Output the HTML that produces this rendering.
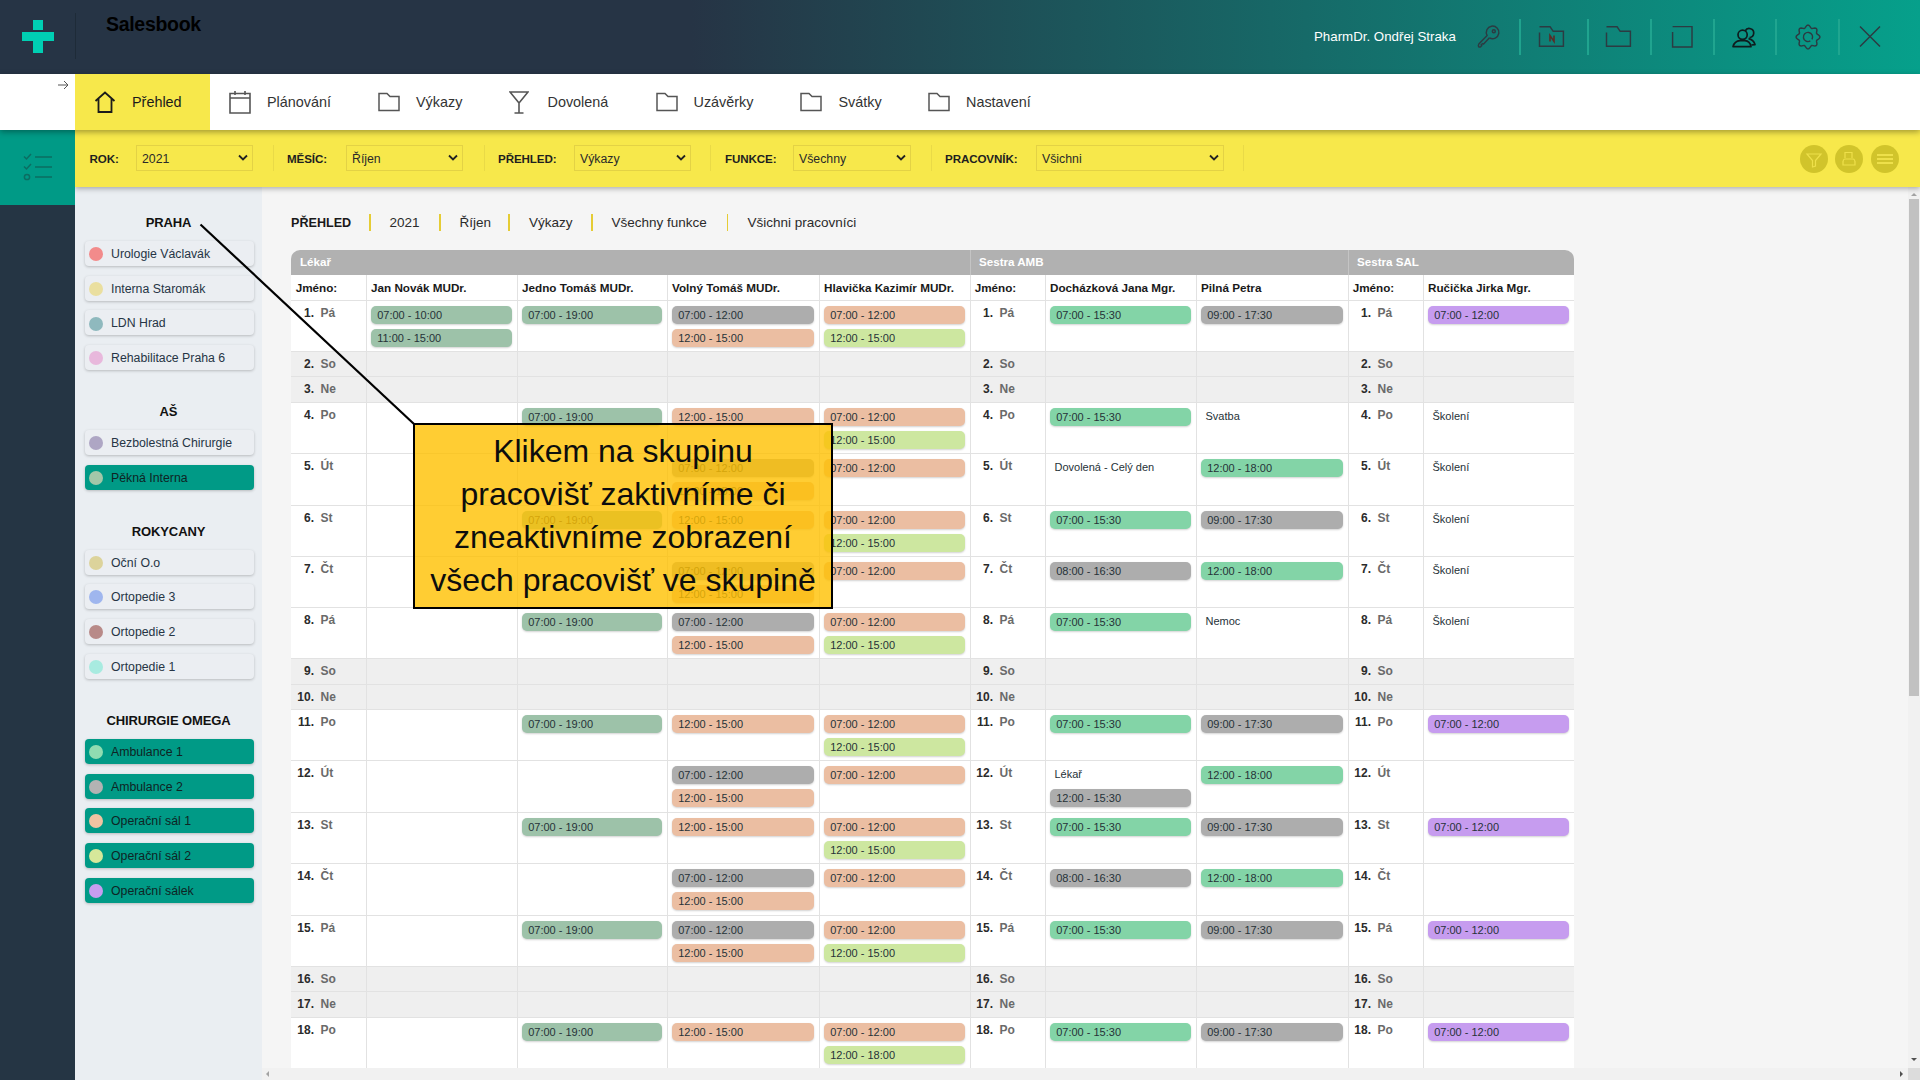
<!DOCTYPE html><html><head><meta charset="utf-8"><style>
*{box-sizing:border-box;margin:0;padding:0}
html,body{width:1920px;height:1080px;overflow:hidden;background:#f5f5f5;font-family:"Liberation Sans", sans-serif;}
.a{position:absolute}
.hdr{left:0;top:0;width:1920px;height:74px;background:linear-gradient(90deg,#263445 0%,#263445 36%,#06a08b 100%)}
.nav{left:0px;top:74px;width:1920px;height:56px;background:#fff;box-shadow:0 2px 6px rgba(0,0,0,.35);z-index:3}
.navtab{position:absolute;top:74px;z-index:5;height:56px;font-size:14.4px;color:#2b2b2b;line-height:56px}
.filt{left:75px;top:130px;width:1845px;height:57px;background:#f7e84b;box-shadow:0 2px 5px rgba(0,0,0,.28);z-index:1}
.lbl{position:absolute;top:0;z-index:2;line-height:57px;font-size:11.6px;font-weight:700;color:#1f1f1f;letter-spacing:-.1px}
.sel{position:absolute;top:15px;height:26px;border:1px solid #e3d245;font-size:12.3px;color:#2a2a2a;line-height:26px;z-index:2;padding-left:5px}
.sel svg{position:absolute;right:3px;top:8px}
.vdiv{position:absolute;top:15px;z-index:2;width:1px;height:26px;background:#e9da47}
.sb{left:75px;top:187px;width:187px;height:893px;background:#eaeef2}
.gt{position:absolute;left:75px;width:187px;text-align:center;font-size:13px;font-weight:700;color:#111;letter-spacing:-.1px}
.it{position:absolute;left:85px;width:169px;height:25px;border-radius:4px;background:#ebeef2;box-shadow:0 1px 3px rgba(0,0,0,.22);font-size:12.3px;color:#263545;line-height:26px;padding-left:26px}
.it i{position:absolute;left:4px;top:6.2px;width:14px;height:14px;border-radius:50%}
.it.on{background:#009a86;color:#0f2424}
.bc{position:absolute;top:214px;font-size:13.5px;color:#2b2b2b;line-height:18px}
.bsep{position:absolute;top:214px;width:1.6px;height:17px;background:#e5cc35}
.cell{position:absolute;border-left:1px solid #e1e1e1}
.pill{position:absolute;height:18px;border-radius:5px;font-size:11px;line-height:18px;color:#263238;padding-left:6px;box-shadow:0 1px 2px rgba(0,0,0,.18)}
.txt{position:absolute;font-size:11px;line-height:18px;color:#263238}
</style></head><body><div class="a hdr"></div>
<div class="a" style="left:33px;top:20px;width:10px;height:10px;background:#00cfb3"></div>
<div class="a" style="left:22px;top:32px;width:32px;height:9px;background:#00cfb3"></div>
<div class="a" style="left:33px;top:41px;width:10px;height:12px;background:#00cfb3"></div>
<div class="a" style="left:75px;top:13px;width:1px;height:46px;background:#1e2b38"></div>
<div class="a" style="left:106px;top:13px;font-size:19.5px;font-weight:700;color:#000;letter-spacing:-.3px">Salesbook</div>
<div class="a" style="left:1314px;top:28px;font-size:13.3px;color:#fff;line-height:18px">PharmDr. Ondřej Straka</div>
<div class="a" style="left:1519px;top:19px;width:1.5px;height:36px;background:#22a791;opacity:.9"></div>
<div class="a" style="left:1587px;top:19px;width:1.5px;height:36px;background:#22a791;opacity:.9"></div>
<div class="a" style="left:1650px;top:19px;width:1.5px;height:36px;background:#22a791;opacity:.9"></div>
<div class="a" style="left:1713px;top:19px;width:1.5px;height:36px;background:#22a791;opacity:.9"></div>
<div class="a" style="left:1775px;top:19px;width:1.5px;height:36px;background:#22a791;opacity:.9"></div>
<div class="a" style="left:1838px;top:19px;width:1.5px;height:36px;background:#22a791;opacity:.9"></div>
<svg class="a" style="left:1476px;top:24px" width="26" height="26" viewBox="0 0 26 26" fill="none" stroke="#2c3b42" stroke-width="1.45" stroke-linejoin="round"><path d="M13.45 13.86 A6.3 6.3 0 1 0 11.14 11.55 L2.8 20 Q2 21.5 2.6 22.6 Q3.6 23.4 4.8 22.6 L5.8 21.6 L5.2 20.6 L6.8 19.6 L7.6 20 L13.45 13.86"/><circle cx="17.8" cy="7.2" r="1.5"/></svg>
<svg class="a" style="left:1538px;top:25px" width="28" height="24" viewBox="0 0 28 24" fill="none" stroke="#2c3b42" stroke-width="1.45"><path d="M1.5 7.5 V21.3 H25.4 V6.3 H15.2 L12.1 1.8 H1.5"/><path d="M12 16.4 V10.6 L16 16.4 V10.6" stroke="#5b2b26" stroke-width="1.6"/></svg>
<svg class="a" style="left:1605px;top:25px" width="28" height="24" viewBox="0 0 28 24" fill="none" stroke="#2c3b42" stroke-width="1.45"><path d="M1.5 7.5 V21.3 H25.4 V6.3 H15.2 L12.1 1.8 H1.5"/></svg>
<svg class="a" style="left:1671px;top:25px" width="23" height="24" viewBox="0 0 23 24" fill="none" stroke="#2c3b42" stroke-width="1.45"><path d="M1.6 7 V22 H21 V1.6 H1.6"/></svg>
<svg class="a" style="left:1731px;top:24px" width="26" height="25" viewBox="0 0 26 25" fill="none" stroke="#0f1c1e" stroke-width="1.7" stroke-linejoin="round"><circle cx="11.6" cy="10.8" r="4.6"/><path d="M14.2 7 A4.5 4.5 0 1 1 18.5 13.5"/><path d="M2 22.6 Q3.5 17 9 16.6 H14 Q19 17 20 22.6 Z"/><path d="M17.5 14.6 Q22.5 15.5 24 20.6 L20.4 21"/></svg>
<svg class="a" style="left:1795px;top:24px" width="26" height="26" viewBox="0 0 26 26" fill="none" stroke="#2c3b42" stroke-width="1.45" stroke-linejoin="round"><path d="M24.90 13.00 L24.70 13.77 L24.15 14.47 L23.40 15.07 L22.61 15.58 L21.97 16.05 L21.59 16.56 L21.50 17.19 L21.62 17.97 L21.81 18.89 L21.93 19.85 L21.82 20.73 L21.41 21.41 L20.73 21.82 L19.85 21.93 L18.89 21.81 L17.98 21.62 L17.19 21.50 L16.56 21.59 L16.05 21.97 L15.58 22.61 L15.07 23.40 L14.47 24.15 L13.77 24.70 L13.00 24.90 L12.23 24.70 L11.53 24.15 L10.93 23.40 L10.42 22.61 L9.95 21.97 L9.44 21.59 L8.81 21.50 L8.03 21.62 L7.11 21.81 L6.15 21.93 L5.27 21.82 L4.59 21.41 L4.18 20.73 L4.07 19.85 L4.19 18.89 L4.38 17.97 L4.50 17.19 L4.41 16.56 L4.03 16.05 L3.39 15.58 L2.60 15.07 L1.85 14.47 L1.30 13.77 L1.10 13.00 L1.30 12.23 L1.85 11.53 L2.60 10.93 L3.39 10.42 L4.03 9.95 L4.41 9.44 L4.50 8.81 L4.38 8.03 L4.19 7.11 L4.07 6.15 L4.18 5.27 L4.59 4.59 L5.27 4.18 L6.15 4.07 L7.11 4.19 L8.02 4.38 L8.81 4.50 L9.44 4.41 L9.95 4.03 L10.42 3.39 L10.93 2.60 L11.53 1.85 L12.23 1.30 L13.00 1.10 L13.77 1.30 L14.47 1.85 L15.07 2.60 L15.58 3.39 L16.05 4.03 L16.56 4.41 L17.19 4.50 L17.98 4.38 L18.89 4.19 L19.85 4.07 L20.73 4.18 L21.41 4.59 L21.82 5.27 L21.93 6.15 L21.81 7.11 L21.62 8.02 L21.50 8.81 L21.59 9.44 L21.97 9.95 L22.61 10.42 L23.40 10.93 L24.15 11.53 L24.70 12.23 L24.90 13.00 Z"/><path d="M15.30 16.98 A4.6 4.6 0 1 1 16.98 15.30"/></svg>
<svg class="a" style="left:1858px;top:25px" width="24" height="23" viewBox="0 0 24 23" fill="none" stroke="#2c3b42" stroke-width="1.45"><path d="M2 1.5 L22 21.5 M22 1.5 L2 21.5"/></svg>
<svg class="a" style="left:57px;top:80px;z-index:5" width="12" height="10" viewBox="0 0 12 10" fill="none" stroke="#555" stroke-width="1"><path d="M1 5 H11 M7 1 L11 5 L7 9"/></svg>
<div class="a nav"></div>
<div class="a" style="left:75px;top:74px;width:135px;height:56px;background:#f7e84b;z-index:4"></div>
<svg class="a" style="left:94px;top:91px;z-index:5" width="22" height="22" viewBox="0 0 22 22" fill="none" stroke="#1b1b1b" stroke-width="1.8"><path d="M1.5 10 L11 1.5 L20.5 10 M4.5 8 V21 H17.5 V8"/></svg>
<div class="navtab" style="left:132px;color:#1b1b1b">Přehled</div>
<svg class="a" style="left:229px;top:90px;z-index:5" width="22" height="24" viewBox="0 0 22 24" fill="none" stroke="#555" stroke-width="1.6"><path d="M1 3.5 H21 V23 H1 Z M1 8 H21 M6 1 V5 M16 1 V5"/></svg>
<div class="navtab" style="left:267px;color:#333">Plánování</div>
<svg class="a" style="left:378px;top:92px;z-index:5" width="22" height="20" viewBox="0 0 22 20" fill="none" stroke="#555" stroke-width="1.5"><path d="M1 1.5 H9 L12 4.5 H21 V18.5 H1 Z"/></svg>
<div class="navtab" style="left:416px;color:#333">Výkazy</div>
<svg class="a" style="left:509px;top:91px;z-index:5" width="20" height="23" viewBox="0 0 20 23" fill="none" stroke="#555" stroke-width="1.6"><path d="M1 1 H19 L10 12 Z M10 12 V22 M5.5 22 H14.5"/></svg>
<div class="navtab" style="left:547.5px;color:#333">Dovolená</div>
<svg class="a" style="left:656px;top:92px;z-index:5" width="22" height="20" viewBox="0 0 22 20" fill="none" stroke="#555" stroke-width="1.5"><path d="M1 1.5 H9 L12 4.5 H21 V18.5 H1 Z"/></svg>
<div class="navtab" style="left:693.5px;color:#333">Uzávěrky</div>
<svg class="a" style="left:800px;top:92px;z-index:5" width="22" height="20" viewBox="0 0 22 20" fill="none" stroke="#555" stroke-width="1.5"><path d="M1 1.5 H9 L12 4.5 H21 V18.5 H1 Z"/></svg>
<div class="navtab" style="left:838.5px;color:#333">Svátky</div>
<svg class="a" style="left:928px;top:92px;z-index:5" width="22" height="20" viewBox="0 0 22 20" fill="none" stroke="#555" stroke-width="1.5"><path d="M1 1.5 H9 L12 4.5 H21 V18.5 H1 Z"/></svg>
<div class="navtab" style="left:966px;color:#333">Nastavení</div>
<div class="a" style="left:0;top:130px;width:75px;height:950px;background:#253544;z-index:2"></div>
<div class="a" style="left:0;top:130px;width:75px;height:75px;background:#009a86;z-index:2"></div>
<svg class="a" style="left:22px;top:150px;z-index:2" width="32" height="32" viewBox="0 0 32 32" fill="none" stroke="#0b6e62" stroke-width="1.5"><path d="M2 6.5 L4.5 9 L9 4 M2 16.5 L4.5 19 L9 14"/><circle cx="5" cy="27" r="2.6"/><path d="M13 7 H30 M13 17 H30 M13 27 H30"/></svg>
<div class="a filt"></div>
<div class="vdiv" style="left:272.5px;top:145px"></div>
<div class="lbl" style="left:89.5px;top:130px">ROK:</div>
<div class="sel" style="left:136px;top:145px;width:117px">2021<svg width="12" height="8" viewBox="0 0 12 8" fill="none" stroke="#222" stroke-width="1.8"><path d="M2 1.5 L6 5.5 L10 1.5"/></svg></div>
<div class="vdiv" style="left:483.5px;top:145px"></div>
<div class="lbl" style="left:287px;top:130px">MĚSÍC:</div>
<div class="sel" style="left:346px;top:145px;width:117px">Říjen<svg width="12" height="8" viewBox="0 0 12 8" fill="none" stroke="#222" stroke-width="1.8"><path d="M2 1.5 L6 5.5 L10 1.5"/></svg></div>
<div class="vdiv" style="left:709.5px;top:145px"></div>
<div class="lbl" style="left:498px;top:130px">PŘEHLED:</div>
<div class="sel" style="left:574px;top:145px;width:117px">Výkazy<svg width="12" height="8" viewBox="0 0 12 8" fill="none" stroke="#222" stroke-width="1.8"><path d="M2 1.5 L6 5.5 L10 1.5"/></svg></div>
<div class="vdiv" style="left:930.5px;top:145px"></div>
<div class="lbl" style="left:725px;top:130px">FUNKCE:</div>
<div class="sel" style="left:793px;top:145px;width:118px">Všechny<svg width="12" height="8" viewBox="0 0 12 8" fill="none" stroke="#222" stroke-width="1.8"><path d="M2 1.5 L6 5.5 L10 1.5"/></svg></div>
<div class="vdiv" style="left:1243px;top:145px"></div>
<div class="lbl" style="left:945px;top:130px">PRACOVNÍK:</div>
<div class="sel" style="left:1036px;top:145px;width:188px">Všichni<svg width="12" height="8" viewBox="0 0 12 8" fill="none" stroke="#222" stroke-width="1.8"><path d="M2 1.5 L6 5.5 L10 1.5"/></svg></div>
<div class="a" style="left:1799.75px;top:145px;width:28px;height:28px;border-radius:50%;background:#d1c42b;z-index:2"></div>
<svg class="a" style="left:1799.75px;top:145px;z-index:3" width="28" height="28" viewBox="0 0 28 28" fill="none" stroke="#eee04a" stroke-width="1.2"><path d="M7 9 H21 L15.5 15.5 V21 L12.5 22 V15.5 Z"/></svg>
<div class="a" style="left:1834.6px;top:145px;width:28px;height:28px;border-radius:50%;background:#d1c42b;z-index:2"></div>
<svg class="a" style="left:1834.6px;top:145px;z-index:3" width="28" height="28" viewBox="0 0 28 28" fill="none" stroke="#eee04a" stroke-width="1.2"><path d="M10 13 V7.5 H17 V13 M8 16 V20 H20 V16 M8 18 C8 15 9 14 10 14 H18 C19 14 20 15 20 18"/></svg>
<div class="a" style="left:1870.8px;top:145px;width:28px;height:28px;border-radius:50%;background:#d1c42b;z-index:2"></div>
<svg class="a" style="left:1870.8px;top:145px;z-index:3" width="28" height="28" viewBox="0 0 28 28" fill="none" stroke="#eee04a" stroke-width="1.8"><path d="M6 10 H22 M6 14 H22 M6 18 H22"/></svg>
<div class="a sb"></div>
<div class="gt" style="top:213.5px;line-height:18px">PRAHA</div>
<div class="it" style="top:241.0px"><i style="background:#f28b8b"></i>Urologie Václavák</div>
<div class="it" style="top:275.7px"><i style="background:#eadf9f"></i>Interna Staromák</div>
<div class="it" style="top:310.4px"><i style="background:#8fb9be"></i>LDN Hrad</div>
<div class="it" style="top:345.1px"><i style="background:#e8b8dc"></i>Rehabilitace Praha 6</div>
<div class="gt" style="top:402.5px;line-height:18px">AŠ</div>
<div class="it" style="top:430.0px"><i style="background:#aea6c4"></i>Bezbolestná Chirurgie</div>
<div class="it on" style="top:464.7px"><i style="background:#a3c7a9"></i>Pěkná Interna</div>
<div class="gt" style="top:522.5px;line-height:18px">ROKYCANY</div>
<div class="it" style="top:549.6px"><i style="background:#dcd39b"></i>Oční O.o</div>
<div class="it" style="top:584.3000000000001px"><i style="background:#9fb6ee"></i>Ortopedie 3</div>
<div class="it" style="top:619.0px"><i style="background:#b88a88"></i>Ortopedie 2</div>
<div class="it" style="top:653.7px"><i style="background:#a8ebe0"></i>Ortopedie 1</div>
<div class="gt" style="top:711.5px;line-height:18px">CHIRURGIE OMEGA</div>
<div class="it on" style="top:738.8px"><i style="background:#8fdcb1"></i>Ambulance 1</div>
<div class="it on" style="top:773.5px"><i style="background:#b3b3b3"></i>Ambulance 2</div>
<div class="it on" style="top:808.1999999999999px"><i style="background:#f0c3a2"></i>Operační sál 1</div>
<div class="it on" style="top:842.9px"><i style="background:#d6e89a"></i>Operační sál 2</div>
<div class="it on" style="top:877.5999999999999px"><i style="background:#c79df0"></i>Operační sálek</div>
<div class="bc" style="left:291px;font-weight:700;font-size:12.6px;color:#1a1a1a">PŘEHLED</div>
<div class="bsep" style="left:369px"></div>
<div class="bc" style="left:389.5px">2021</div>
<div class="bsep" style="left:439px"></div>
<div class="bc" style="left:459.5px">Říjen</div>
<div class="bsep" style="left:508px"></div>
<div class="bc" style="left:529px">Výkazy</div>
<div class="bsep" style="left:591px"></div>
<div class="bc" style="left:611.5px">Všechny funkce</div>
<div class="bsep" style="left:726.5px"></div>
<div class="bc" style="left:747.5px">Všichni pracovníci</div>
<div class="a" style="left:262px;top:187px;width:1646px;height:881px;overflow:hidden">
<div class="a" style="left:29px;top:63px;width:1283px;height:24.5px;background:#b1b1b1;border-radius:9px 9px 0 0"></div>
<div class="a" style="left:708px;top:63px;width:1px;height:24.5px;background:#c4c4c4"></div>
<div class="a" style="left:1086px;top:63px;width:1px;height:24.5px;background:#c4c4c4"></div>
<div class="a" style="left:38px;top:66px;line-height:18px;font-size:11.6px;font-weight:700;color:#fff">Lékař</div>
<div class="a" style="left:717px;top:66px;line-height:18px;font-size:11.6px;font-weight:700;color:#fff">Sestra AMB</div>
<div class="a" style="left:1095px;top:66px;line-height:18px;font-size:11.6px;font-weight:700;color:#fff">Sestra SAL</div>
<div class="a" style="left:29px;top:87.5px;width:1283px;height:26px;background:#fff"></div>
<div class="a" style="left:33.7px;top:92px;line-height:18px;font-size:11.7px;font-weight:700;color:#1a1a1a">Jméno:</div>
<div class="a" style="left:109px;top:92px;line-height:18px;font-size:11.7px;font-weight:700;color:#1a1a1a">Jan Novák MUDr.</div>
<div class="a" style="left:260px;top:92px;line-height:18px;font-size:11.7px;font-weight:700;color:#1a1a1a">Jedno Tomáš MUDr.</div>
<div class="a" style="left:410px;top:92px;line-height:18px;font-size:11.7px;font-weight:700;color:#1a1a1a">Volný Tomáš MUDr.</div>
<div class="a" style="left:562px;top:92px;line-height:18px;font-size:11.7px;font-weight:700;color:#1a1a1a">Hlavička Kazimír MUDr.</div>
<div class="a" style="left:712.7px;top:92px;line-height:18px;font-size:11.7px;font-weight:700;color:#1a1a1a">Jméno:</div>
<div class="a" style="left:788px;top:92px;line-height:18px;font-size:11.7px;font-weight:700;color:#1a1a1a">Docházková Jana Mgr.</div>
<div class="a" style="left:939px;top:92px;line-height:18px;font-size:11.7px;font-weight:700;color:#1a1a1a">Pilná Petra</div>
<div class="a" style="left:1090.7px;top:92px;line-height:18px;font-size:11.7px;font-weight:700;color:#1a1a1a">Jméno:</div>
<div class="a" style="left:1166px;top:92px;line-height:18px;font-size:11.7px;font-weight:700;color:#1a1a1a">Ručička Jirka Mgr.</div>
<div class="a" style="left:29px;top:113px;width:1283px;height:51px;background:#fff;border-top:1px solid #e2e2e2"></div>
<div class="a" style="left:29px;top:116.8px;width:23px;text-align:right;line-height:18px;font-size:12px;font-weight:700;color:#2b2b2b">1.</div>
<div class="a" style="left:58.5px;top:116.8px;line-height:18px;font-size:12px;font-weight:700;color:#6a6a6a">Pá</div>
<div class="a" style="left:708px;top:116.8px;width:23px;text-align:right;line-height:18px;font-size:12px;font-weight:700;color:#2b2b2b">1.</div>
<div class="a" style="left:737.5px;top:116.8px;line-height:18px;font-size:12px;font-weight:700;color:#6a6a6a">Pá</div>
<div class="a" style="left:1086px;top:116.8px;width:23px;text-align:right;line-height:18px;font-size:12px;font-weight:700;color:#2b2b2b">1.</div>
<div class="a" style="left:1115.5px;top:116.8px;line-height:18px;font-size:12px;font-weight:700;color:#6a6a6a">Pá</div>
<div class="pill" style="left:109.2px;top:119.0px;width:141.3px;background:#9dc2a9">07:00 - 10:00</div>
<div class="pill" style="left:109.2px;top:142.2px;width:141.3px;background:#9dc2a9">11:00 - 15:00</div>
<div class="pill" style="left:260.2px;top:119.0px;width:140.3px;background:#9dc2a9">07:00 - 19:00</div>
<div class="pill" style="left:410.2px;top:119.0px;width:142.3px;background:#adadad">07:00 - 12:00</div>
<div class="pill" style="left:410.2px;top:142.2px;width:142.3px;background:#ebbea2">12:00 - 15:00</div>
<div class="pill" style="left:562.2px;top:119.0px;width:141.3px;background:#ebbea2">07:00 - 12:00</div>
<div class="pill" style="left:562.2px;top:142.2px;width:141.3px;background:#cde7a0">12:00 - 15:00</div>
<div class="pill" style="left:788.2px;top:119.0px;width:141.3px;background:#83d4a7">07:00 - 15:30</div>
<div class="pill" style="left:939.2px;top:119.0px;width:142.3px;background:#adadad">09:00 - 17:30</div>
<div class="pill" style="left:1166.2px;top:119.0px;width:141.3px;background:#c69cef">07:00 - 12:00</div>
<div class="a" style="left:29px;top:164px;width:1283px;height:25px;background:#efefef;border-top:1px solid #e2e2e2"></div>
<div class="a" style="left:29px;top:167.8px;width:23px;text-align:right;line-height:18px;font-size:12px;font-weight:700;color:#2b2b2b">2.</div>
<div class="a" style="left:58.5px;top:167.8px;line-height:18px;font-size:12px;font-weight:700;color:#6a6a6a">So</div>
<div class="a" style="left:708px;top:167.8px;width:23px;text-align:right;line-height:18px;font-size:12px;font-weight:700;color:#2b2b2b">2.</div>
<div class="a" style="left:737.5px;top:167.8px;line-height:18px;font-size:12px;font-weight:700;color:#6a6a6a">So</div>
<div class="a" style="left:1086px;top:167.8px;width:23px;text-align:right;line-height:18px;font-size:12px;font-weight:700;color:#2b2b2b">2.</div>
<div class="a" style="left:1115.5px;top:167.8px;line-height:18px;font-size:12px;font-weight:700;color:#6a6a6a">So</div>
<div class="a" style="left:29px;top:189px;width:1283px;height:26px;background:#efefef;border-top:1px solid #e2e2e2"></div>
<div class="a" style="left:29px;top:192.8px;width:23px;text-align:right;line-height:18px;font-size:12px;font-weight:700;color:#2b2b2b">3.</div>
<div class="a" style="left:58.5px;top:192.8px;line-height:18px;font-size:12px;font-weight:700;color:#6a6a6a">Ne</div>
<div class="a" style="left:708px;top:192.8px;width:23px;text-align:right;line-height:18px;font-size:12px;font-weight:700;color:#2b2b2b">3.</div>
<div class="a" style="left:737.5px;top:192.8px;line-height:18px;font-size:12px;font-weight:700;color:#6a6a6a">Ne</div>
<div class="a" style="left:1086px;top:192.8px;width:23px;text-align:right;line-height:18px;font-size:12px;font-weight:700;color:#2b2b2b">3.</div>
<div class="a" style="left:1115.5px;top:192.8px;line-height:18px;font-size:12px;font-weight:700;color:#6a6a6a">Ne</div>
<div class="a" style="left:29px;top:215px;width:1283px;height:51px;background:#fff;border-top:1px solid #e2e2e2"></div>
<div class="a" style="left:29px;top:218.8px;width:23px;text-align:right;line-height:18px;font-size:12px;font-weight:700;color:#2b2b2b">4.</div>
<div class="a" style="left:58.5px;top:218.8px;line-height:18px;font-size:12px;font-weight:700;color:#6a6a6a">Po</div>
<div class="a" style="left:708px;top:218.8px;width:23px;text-align:right;line-height:18px;font-size:12px;font-weight:700;color:#2b2b2b">4.</div>
<div class="a" style="left:737.5px;top:218.8px;line-height:18px;font-size:12px;font-weight:700;color:#6a6a6a">Po</div>
<div class="a" style="left:1086px;top:218.8px;width:23px;text-align:right;line-height:18px;font-size:12px;font-weight:700;color:#2b2b2b">4.</div>
<div class="a" style="left:1115.5px;top:218.8px;line-height:18px;font-size:12px;font-weight:700;color:#6a6a6a">Po</div>
<div class="pill" style="left:260.2px;top:221.0px;width:140.3px;background:#9dc2a9">07:00 - 19:00</div>
<div class="pill" style="left:410.2px;top:221.0px;width:142.3px;background:#ebbea2">12:00 - 15:00</div>
<div class="pill" style="left:562.2px;top:221.0px;width:141.3px;background:#ebbea2">07:00 - 12:00</div>
<div class="pill" style="left:562.2px;top:244.2px;width:141.3px;background:#cde7a0">12:00 - 15:00</div>
<div class="pill" style="left:788.2px;top:221.0px;width:141.3px;background:#83d4a7">07:00 - 15:30</div>
<div class="txt" style="left:943.5px;top:219.5px">Svatba</div>
<div class="txt" style="left:1170.5px;top:219.5px">Školení</div>
<div class="a" style="left:29px;top:266px;width:1283px;height:52px;background:#fff;border-top:1px solid #e2e2e2"></div>
<div class="a" style="left:29px;top:269.8px;width:23px;text-align:right;line-height:18px;font-size:12px;font-weight:700;color:#2b2b2b">5.</div>
<div class="a" style="left:58.5px;top:269.8px;line-height:18px;font-size:12px;font-weight:700;color:#6a6a6a">Út</div>
<div class="a" style="left:708px;top:269.8px;width:23px;text-align:right;line-height:18px;font-size:12px;font-weight:700;color:#2b2b2b">5.</div>
<div class="a" style="left:737.5px;top:269.8px;line-height:18px;font-size:12px;font-weight:700;color:#6a6a6a">Út</div>
<div class="a" style="left:1086px;top:269.8px;width:23px;text-align:right;line-height:18px;font-size:12px;font-weight:700;color:#2b2b2b">5.</div>
<div class="a" style="left:1115.5px;top:269.8px;line-height:18px;font-size:12px;font-weight:700;color:#6a6a6a">Út</div>
<div class="pill" style="left:410.2px;top:272.0px;width:142.3px;background:#adadad">07:00 - 12:00</div>
<div class="pill" style="left:410.2px;top:295.2px;width:142.3px;background:#ebbea2">12:00 - 15:00</div>
<div class="pill" style="left:562.2px;top:272.0px;width:141.3px;background:#ebbea2">07:00 - 12:00</div>
<div class="txt" style="left:792.5px;top:270.5px">Dovolená - Celý den</div>
<div class="pill" style="left:939.2px;top:272.0px;width:142.3px;background:#83d4a7">12:00 - 18:00</div>
<div class="txt" style="left:1170.5px;top:270.5px">Školení</div>
<div class="a" style="left:29px;top:318px;width:1283px;height:51px;background:#fff;border-top:1px solid #e2e2e2"></div>
<div class="a" style="left:29px;top:321.8px;width:23px;text-align:right;line-height:18px;font-size:12px;font-weight:700;color:#2b2b2b">6.</div>
<div class="a" style="left:58.5px;top:321.8px;line-height:18px;font-size:12px;font-weight:700;color:#6a6a6a">St</div>
<div class="a" style="left:708px;top:321.8px;width:23px;text-align:right;line-height:18px;font-size:12px;font-weight:700;color:#2b2b2b">6.</div>
<div class="a" style="left:737.5px;top:321.8px;line-height:18px;font-size:12px;font-weight:700;color:#6a6a6a">St</div>
<div class="a" style="left:1086px;top:321.8px;width:23px;text-align:right;line-height:18px;font-size:12px;font-weight:700;color:#2b2b2b">6.</div>
<div class="a" style="left:1115.5px;top:321.8px;line-height:18px;font-size:12px;font-weight:700;color:#6a6a6a">St</div>
<div class="pill" style="left:260.2px;top:324.0px;width:140.3px;background:#9dc2a9">07:00 - 19:00</div>
<div class="pill" style="left:410.2px;top:324.0px;width:142.3px;background:#ebbea2">12:00 - 15:00</div>
<div class="pill" style="left:562.2px;top:324.0px;width:141.3px;background:#ebbea2">07:00 - 12:00</div>
<div class="pill" style="left:562.2px;top:347.2px;width:141.3px;background:#cde7a0">12:00 - 15:00</div>
<div class="pill" style="left:788.2px;top:324.0px;width:141.3px;background:#83d4a7">07:00 - 15:30</div>
<div class="pill" style="left:939.2px;top:324.0px;width:142.3px;background:#adadad">09:00 - 17:30</div>
<div class="txt" style="left:1170.5px;top:322.5px">Školení</div>
<div class="a" style="left:29px;top:369px;width:1283px;height:51px;background:#fff;border-top:1px solid #e2e2e2"></div>
<div class="a" style="left:29px;top:372.8px;width:23px;text-align:right;line-height:18px;font-size:12px;font-weight:700;color:#2b2b2b">7.</div>
<div class="a" style="left:58.5px;top:372.8px;line-height:18px;font-size:12px;font-weight:700;color:#6a6a6a">Čt</div>
<div class="a" style="left:708px;top:372.8px;width:23px;text-align:right;line-height:18px;font-size:12px;font-weight:700;color:#2b2b2b">7.</div>
<div class="a" style="left:737.5px;top:372.8px;line-height:18px;font-size:12px;font-weight:700;color:#6a6a6a">Čt</div>
<div class="a" style="left:1086px;top:372.8px;width:23px;text-align:right;line-height:18px;font-size:12px;font-weight:700;color:#2b2b2b">7.</div>
<div class="a" style="left:1115.5px;top:372.8px;line-height:18px;font-size:12px;font-weight:700;color:#6a6a6a">Čt</div>
<div class="pill" style="left:410.2px;top:375.0px;width:142.3px;background:#adadad">07:00 - 12:00</div>
<div class="pill" style="left:410.2px;top:398.2px;width:142.3px;background:#ebbea2">12:00 - 15:00</div>
<div class="pill" style="left:562.2px;top:375.0px;width:141.3px;background:#ebbea2">07:00 - 12:00</div>
<div class="pill" style="left:788.2px;top:375.0px;width:141.3px;background:#adadad">08:00 - 16:30</div>
<div class="pill" style="left:939.2px;top:375.0px;width:142.3px;background:#83d4a7">12:00 - 18:00</div>
<div class="txt" style="left:1170.5px;top:373.5px">Školení</div>
<div class="a" style="left:29px;top:420px;width:1283px;height:51px;background:#fff;border-top:1px solid #e2e2e2"></div>
<div class="a" style="left:29px;top:423.8px;width:23px;text-align:right;line-height:18px;font-size:12px;font-weight:700;color:#2b2b2b">8.</div>
<div class="a" style="left:58.5px;top:423.8px;line-height:18px;font-size:12px;font-weight:700;color:#6a6a6a">Pá</div>
<div class="a" style="left:708px;top:423.8px;width:23px;text-align:right;line-height:18px;font-size:12px;font-weight:700;color:#2b2b2b">8.</div>
<div class="a" style="left:737.5px;top:423.8px;line-height:18px;font-size:12px;font-weight:700;color:#6a6a6a">Pá</div>
<div class="a" style="left:1086px;top:423.8px;width:23px;text-align:right;line-height:18px;font-size:12px;font-weight:700;color:#2b2b2b">8.</div>
<div class="a" style="left:1115.5px;top:423.8px;line-height:18px;font-size:12px;font-weight:700;color:#6a6a6a">Pá</div>
<div class="pill" style="left:260.2px;top:426.0px;width:140.3px;background:#9dc2a9">07:00 - 19:00</div>
<div class="pill" style="left:410.2px;top:426.0px;width:142.3px;background:#adadad">07:00 - 12:00</div>
<div class="pill" style="left:410.2px;top:449.2px;width:142.3px;background:#ebbea2">12:00 - 15:00</div>
<div class="pill" style="left:562.2px;top:426.0px;width:141.3px;background:#ebbea2">07:00 - 12:00</div>
<div class="pill" style="left:562.2px;top:449.2px;width:141.3px;background:#cde7a0">12:00 - 15:00</div>
<div class="pill" style="left:788.2px;top:426.0px;width:141.3px;background:#83d4a7">07:00 - 15:30</div>
<div class="txt" style="left:943.5px;top:424.5px">Nemoc</div>
<div class="txt" style="left:1170.5px;top:424.5px">Školení</div>
<div class="a" style="left:29px;top:471px;width:1283px;height:26px;background:#efefef;border-top:1px solid #e2e2e2"></div>
<div class="a" style="left:29px;top:474.8px;width:23px;text-align:right;line-height:18px;font-size:12px;font-weight:700;color:#2b2b2b">9.</div>
<div class="a" style="left:58.5px;top:474.8px;line-height:18px;font-size:12px;font-weight:700;color:#6a6a6a">So</div>
<div class="a" style="left:708px;top:474.8px;width:23px;text-align:right;line-height:18px;font-size:12px;font-weight:700;color:#2b2b2b">9.</div>
<div class="a" style="left:737.5px;top:474.8px;line-height:18px;font-size:12px;font-weight:700;color:#6a6a6a">So</div>
<div class="a" style="left:1086px;top:474.8px;width:23px;text-align:right;line-height:18px;font-size:12px;font-weight:700;color:#2b2b2b">9.</div>
<div class="a" style="left:1115.5px;top:474.8px;line-height:18px;font-size:12px;font-weight:700;color:#6a6a6a">So</div>
<div class="a" style="left:29px;top:497px;width:1283px;height:25px;background:#efefef;border-top:1px solid #e2e2e2"></div>
<div class="a" style="left:29px;top:500.8px;width:23px;text-align:right;line-height:18px;font-size:12px;font-weight:700;color:#2b2b2b">10.</div>
<div class="a" style="left:58.5px;top:500.8px;line-height:18px;font-size:12px;font-weight:700;color:#6a6a6a">Ne</div>
<div class="a" style="left:708px;top:500.8px;width:23px;text-align:right;line-height:18px;font-size:12px;font-weight:700;color:#2b2b2b">10.</div>
<div class="a" style="left:737.5px;top:500.8px;line-height:18px;font-size:12px;font-weight:700;color:#6a6a6a">Ne</div>
<div class="a" style="left:1086px;top:500.8px;width:23px;text-align:right;line-height:18px;font-size:12px;font-weight:700;color:#2b2b2b">10.</div>
<div class="a" style="left:1115.5px;top:500.8px;line-height:18px;font-size:12px;font-weight:700;color:#6a6a6a">Ne</div>
<div class="a" style="left:29px;top:522px;width:1283px;height:51px;background:#fff;border-top:1px solid #e2e2e2"></div>
<div class="a" style="left:29px;top:525.8px;width:23px;text-align:right;line-height:18px;font-size:12px;font-weight:700;color:#2b2b2b">11.</div>
<div class="a" style="left:58.5px;top:525.8px;line-height:18px;font-size:12px;font-weight:700;color:#6a6a6a">Po</div>
<div class="a" style="left:708px;top:525.8px;width:23px;text-align:right;line-height:18px;font-size:12px;font-weight:700;color:#2b2b2b">11.</div>
<div class="a" style="left:737.5px;top:525.8px;line-height:18px;font-size:12px;font-weight:700;color:#6a6a6a">Po</div>
<div class="a" style="left:1086px;top:525.8px;width:23px;text-align:right;line-height:18px;font-size:12px;font-weight:700;color:#2b2b2b">11.</div>
<div class="a" style="left:1115.5px;top:525.8px;line-height:18px;font-size:12px;font-weight:700;color:#6a6a6a">Po</div>
<div class="pill" style="left:260.2px;top:528.0px;width:140.3px;background:#9dc2a9">07:00 - 19:00</div>
<div class="pill" style="left:410.2px;top:528.0px;width:142.3px;background:#ebbea2">12:00 - 15:00</div>
<div class="pill" style="left:562.2px;top:528.0px;width:141.3px;background:#ebbea2">07:00 - 12:00</div>
<div class="pill" style="left:562.2px;top:551.2px;width:141.3px;background:#cde7a0">12:00 - 15:00</div>
<div class="pill" style="left:788.2px;top:528.0px;width:141.3px;background:#83d4a7">07:00 - 15:30</div>
<div class="pill" style="left:939.2px;top:528.0px;width:142.3px;background:#adadad">09:00 - 17:30</div>
<div class="pill" style="left:1166.2px;top:528.0px;width:141.3px;background:#c69cef">07:00 - 12:00</div>
<div class="a" style="left:29px;top:573px;width:1283px;height:52px;background:#fff;border-top:1px solid #e2e2e2"></div>
<div class="a" style="left:29px;top:576.8px;width:23px;text-align:right;line-height:18px;font-size:12px;font-weight:700;color:#2b2b2b">12.</div>
<div class="a" style="left:58.5px;top:576.8px;line-height:18px;font-size:12px;font-weight:700;color:#6a6a6a">Út</div>
<div class="a" style="left:708px;top:576.8px;width:23px;text-align:right;line-height:18px;font-size:12px;font-weight:700;color:#2b2b2b">12.</div>
<div class="a" style="left:737.5px;top:576.8px;line-height:18px;font-size:12px;font-weight:700;color:#6a6a6a">Út</div>
<div class="a" style="left:1086px;top:576.8px;width:23px;text-align:right;line-height:18px;font-size:12px;font-weight:700;color:#2b2b2b">12.</div>
<div class="a" style="left:1115.5px;top:576.8px;line-height:18px;font-size:12px;font-weight:700;color:#6a6a6a">Út</div>
<div class="pill" style="left:410.2px;top:579.0px;width:142.3px;background:#adadad">07:00 - 12:00</div>
<div class="pill" style="left:410.2px;top:602.2px;width:142.3px;background:#ebbea2">12:00 - 15:00</div>
<div class="pill" style="left:562.2px;top:579.0px;width:141.3px;background:#ebbea2">07:00 - 12:00</div>
<div class="txt" style="left:792.5px;top:577.5px">Lékař</div>
<div class="pill" style="left:788.2px;top:602.2px;width:141.3px;background:#adadad">12:00 - 15:30</div>
<div class="pill" style="left:939.2px;top:579.0px;width:142.3px;background:#83d4a7">12:00 - 18:00</div>
<div class="a" style="left:29px;top:625px;width:1283px;height:51px;background:#fff;border-top:1px solid #e2e2e2"></div>
<div class="a" style="left:29px;top:628.8px;width:23px;text-align:right;line-height:18px;font-size:12px;font-weight:700;color:#2b2b2b">13.</div>
<div class="a" style="left:58.5px;top:628.8px;line-height:18px;font-size:12px;font-weight:700;color:#6a6a6a">St</div>
<div class="a" style="left:708px;top:628.8px;width:23px;text-align:right;line-height:18px;font-size:12px;font-weight:700;color:#2b2b2b">13.</div>
<div class="a" style="left:737.5px;top:628.8px;line-height:18px;font-size:12px;font-weight:700;color:#6a6a6a">St</div>
<div class="a" style="left:1086px;top:628.8px;width:23px;text-align:right;line-height:18px;font-size:12px;font-weight:700;color:#2b2b2b">13.</div>
<div class="a" style="left:1115.5px;top:628.8px;line-height:18px;font-size:12px;font-weight:700;color:#6a6a6a">St</div>
<div class="pill" style="left:260.2px;top:631.0px;width:140.3px;background:#9dc2a9">07:00 - 19:00</div>
<div class="pill" style="left:410.2px;top:631.0px;width:142.3px;background:#ebbea2">12:00 - 15:00</div>
<div class="pill" style="left:562.2px;top:631.0px;width:141.3px;background:#ebbea2">07:00 - 12:00</div>
<div class="pill" style="left:562.2px;top:654.2px;width:141.3px;background:#cde7a0">12:00 - 15:00</div>
<div class="pill" style="left:788.2px;top:631.0px;width:141.3px;background:#83d4a7">07:00 - 15:30</div>
<div class="pill" style="left:939.2px;top:631.0px;width:142.3px;background:#adadad">09:00 - 17:30</div>
<div class="pill" style="left:1166.2px;top:631.0px;width:141.3px;background:#c69cef">07:00 - 12:00</div>
<div class="a" style="left:29px;top:676px;width:1283px;height:52px;background:#fff;border-top:1px solid #e2e2e2"></div>
<div class="a" style="left:29px;top:679.8px;width:23px;text-align:right;line-height:18px;font-size:12px;font-weight:700;color:#2b2b2b">14.</div>
<div class="a" style="left:58.5px;top:679.8px;line-height:18px;font-size:12px;font-weight:700;color:#6a6a6a">Čt</div>
<div class="a" style="left:708px;top:679.8px;width:23px;text-align:right;line-height:18px;font-size:12px;font-weight:700;color:#2b2b2b">14.</div>
<div class="a" style="left:737.5px;top:679.8px;line-height:18px;font-size:12px;font-weight:700;color:#6a6a6a">Čt</div>
<div class="a" style="left:1086px;top:679.8px;width:23px;text-align:right;line-height:18px;font-size:12px;font-weight:700;color:#2b2b2b">14.</div>
<div class="a" style="left:1115.5px;top:679.8px;line-height:18px;font-size:12px;font-weight:700;color:#6a6a6a">Čt</div>
<div class="pill" style="left:410.2px;top:682.0px;width:142.3px;background:#adadad">07:00 - 12:00</div>
<div class="pill" style="left:410.2px;top:705.2px;width:142.3px;background:#ebbea2">12:00 - 15:00</div>
<div class="pill" style="left:562.2px;top:682.0px;width:141.3px;background:#ebbea2">07:00 - 12:00</div>
<div class="pill" style="left:788.2px;top:682.0px;width:141.3px;background:#adadad">08:00 - 16:30</div>
<div class="pill" style="left:939.2px;top:682.0px;width:142.3px;background:#83d4a7">12:00 - 18:00</div>
<div class="a" style="left:29px;top:728px;width:1283px;height:51px;background:#fff;border-top:1px solid #e2e2e2"></div>
<div class="a" style="left:29px;top:731.8px;width:23px;text-align:right;line-height:18px;font-size:12px;font-weight:700;color:#2b2b2b">15.</div>
<div class="a" style="left:58.5px;top:731.8px;line-height:18px;font-size:12px;font-weight:700;color:#6a6a6a">Pá</div>
<div class="a" style="left:708px;top:731.8px;width:23px;text-align:right;line-height:18px;font-size:12px;font-weight:700;color:#2b2b2b">15.</div>
<div class="a" style="left:737.5px;top:731.8px;line-height:18px;font-size:12px;font-weight:700;color:#6a6a6a">Pá</div>
<div class="a" style="left:1086px;top:731.8px;width:23px;text-align:right;line-height:18px;font-size:12px;font-weight:700;color:#2b2b2b">15.</div>
<div class="a" style="left:1115.5px;top:731.8px;line-height:18px;font-size:12px;font-weight:700;color:#6a6a6a">Pá</div>
<div class="pill" style="left:260.2px;top:734.0px;width:140.3px;background:#9dc2a9">07:00 - 19:00</div>
<div class="pill" style="left:410.2px;top:734.0px;width:142.3px;background:#adadad">07:00 - 12:00</div>
<div class="pill" style="left:410.2px;top:757.2px;width:142.3px;background:#ebbea2">12:00 - 15:00</div>
<div class="pill" style="left:562.2px;top:734.0px;width:141.3px;background:#ebbea2">07:00 - 12:00</div>
<div class="pill" style="left:562.2px;top:757.2px;width:141.3px;background:#cde7a0">12:00 - 15:00</div>
<div class="pill" style="left:788.2px;top:734.0px;width:141.3px;background:#83d4a7">07:00 - 15:30</div>
<div class="pill" style="left:939.2px;top:734.0px;width:142.3px;background:#adadad">09:00 - 17:30</div>
<div class="pill" style="left:1166.2px;top:734.0px;width:141.3px;background:#c69cef">07:00 - 12:00</div>
<div class="a" style="left:29px;top:779px;width:1283px;height:25px;background:#efefef;border-top:1px solid #e2e2e2"></div>
<div class="a" style="left:29px;top:782.8px;width:23px;text-align:right;line-height:18px;font-size:12px;font-weight:700;color:#2b2b2b">16.</div>
<div class="a" style="left:58.5px;top:782.8px;line-height:18px;font-size:12px;font-weight:700;color:#6a6a6a">So</div>
<div class="a" style="left:708px;top:782.8px;width:23px;text-align:right;line-height:18px;font-size:12px;font-weight:700;color:#2b2b2b">16.</div>
<div class="a" style="left:737.5px;top:782.8px;line-height:18px;font-size:12px;font-weight:700;color:#6a6a6a">So</div>
<div class="a" style="left:1086px;top:782.8px;width:23px;text-align:right;line-height:18px;font-size:12px;font-weight:700;color:#2b2b2b">16.</div>
<div class="a" style="left:1115.5px;top:782.8px;line-height:18px;font-size:12px;font-weight:700;color:#6a6a6a">So</div>
<div class="a" style="left:29px;top:804px;width:1283px;height:26px;background:#efefef;border-top:1px solid #e2e2e2"></div>
<div class="a" style="left:29px;top:807.8px;width:23px;text-align:right;line-height:18px;font-size:12px;font-weight:700;color:#2b2b2b">17.</div>
<div class="a" style="left:58.5px;top:807.8px;line-height:18px;font-size:12px;font-weight:700;color:#6a6a6a">Ne</div>
<div class="a" style="left:708px;top:807.8px;width:23px;text-align:right;line-height:18px;font-size:12px;font-weight:700;color:#2b2b2b">17.</div>
<div class="a" style="left:737.5px;top:807.8px;line-height:18px;font-size:12px;font-weight:700;color:#6a6a6a">Ne</div>
<div class="a" style="left:1086px;top:807.8px;width:23px;text-align:right;line-height:18px;font-size:12px;font-weight:700;color:#2b2b2b">17.</div>
<div class="a" style="left:1115.5px;top:807.8px;line-height:18px;font-size:12px;font-weight:700;color:#6a6a6a">Ne</div>
<div class="a" style="left:29px;top:830px;width:1283px;height:51px;background:#fff;border-top:1px solid #e2e2e2"></div>
<div class="a" style="left:29px;top:833.8px;width:23px;text-align:right;line-height:18px;font-size:12px;font-weight:700;color:#2b2b2b">18.</div>
<div class="a" style="left:58.5px;top:833.8px;line-height:18px;font-size:12px;font-weight:700;color:#6a6a6a">Po</div>
<div class="a" style="left:708px;top:833.8px;width:23px;text-align:right;line-height:18px;font-size:12px;font-weight:700;color:#2b2b2b">18.</div>
<div class="a" style="left:737.5px;top:833.8px;line-height:18px;font-size:12px;font-weight:700;color:#6a6a6a">Po</div>
<div class="a" style="left:1086px;top:833.8px;width:23px;text-align:right;line-height:18px;font-size:12px;font-weight:700;color:#2b2b2b">18.</div>
<div class="a" style="left:1115.5px;top:833.8px;line-height:18px;font-size:12px;font-weight:700;color:#6a6a6a">Po</div>
<div class="pill" style="left:260.2px;top:836.0px;width:140.3px;background:#9dc2a9">07:00 - 19:00</div>
<div class="pill" style="left:410.2px;top:836.0px;width:142.3px;background:#ebbea2">12:00 - 15:00</div>
<div class="pill" style="left:562.2px;top:836.0px;width:141.3px;background:#ebbea2">07:00 - 12:00</div>
<div class="pill" style="left:562.2px;top:859.2px;width:141.3px;background:#cde7a0">12:00 - 18:00</div>
<div class="pill" style="left:788.2px;top:836.0px;width:141.3px;background:#83d4a7">07:00 - 15:30</div>
<div class="pill" style="left:939.2px;top:836.0px;width:142.3px;background:#adadad">09:00 - 17:30</div>
<div class="pill" style="left:1166.2px;top:836.0px;width:141.3px;background:#c69cef">07:00 - 12:00</div>
<div class="a" style="left:104px;top:87.5px;width:1px;height:900px;background:#e2e2e2"></div>
<div class="a" style="left:255px;top:87.5px;width:1px;height:900px;background:#e2e2e2"></div>
<div class="a" style="left:405px;top:87.5px;width:1px;height:900px;background:#e2e2e2"></div>
<div class="a" style="left:557px;top:87.5px;width:1px;height:900px;background:#e2e2e2"></div>
<div class="a" style="left:708px;top:87.5px;width:1px;height:900px;background:#e2e2e2"></div>
<div class="a" style="left:783px;top:87.5px;width:1px;height:900px;background:#e2e2e2"></div>
<div class="a" style="left:934px;top:87.5px;width:1px;height:900px;background:#e2e2e2"></div>
<div class="a" style="left:1086px;top:87.5px;width:1px;height:900px;background:#e2e2e2"></div>
<div class="a" style="left:1161px;top:87.5px;width:1px;height:900px;background:#e2e2e2"></div>
</div>
<div class="a" style="left:1908px;top:187px;width:12px;height:893px;background:#f1f1f1"></div>
<div class="a" style="left:1909px;top:199px;width:10px;height:497px;background:#c1c1c1"></div>
<svg class="a" style="left:1908px;top:190px" width="12" height="8" viewBox="0 0 12 8"><path d="M3 6 L6 3 L9 6 Z" fill="#a3a3a3"/></svg>
<svg class="a" style="left:1908px;top:1056px" width="12" height="8" viewBox="0 0 12 8"><path d="M3 2 L6 5 L9 2 Z" fill="#505050"/></svg>
<div class="a" style="left:262px;top:1068px;width:1646px;height:12px;background:#f1f1f1"></div>
<svg class="a" style="left:263px;top:1068px" width="10" height="12" viewBox="0 0 10 12"><path d="M6 3 L3 6 L6 9 Z" fill="#a3a3a3"/></svg>
<svg class="a" style="left:1896px;top:1068px" width="10" height="12" viewBox="0 0 10 12"><path d="M4 3 L7 6 L4 9 Z" fill="#505050"/></svg>
<div class="a" style="left:1908px;top:1068px;width:12px;height:12px;background:#dcdcdc"></div>
<svg class="a" style="left:0;top:0" width="1920" height="1080" viewBox="0 0 1920 1080"><path d="M200.5 224.5 L414 424" stroke="#000" stroke-width="2.2" fill="none"/></svg>
<div class="a" style="left:413px;top:423px;width:420px;height:186px;border:2px solid #000;background:rgba(255,192,0,.8)"></div>
<div class="a" style="left:413px;width:420px;top:431px;text-align:center;font-size:32px;line-height:40px;color:#0d0d0d">Klikem na skupinu</div>
<div class="a" style="left:413px;width:420px;top:474px;text-align:center;font-size:32px;line-height:40px;color:#0d0d0d">pracovišť zaktivníme či</div>
<div class="a" style="left:413px;width:420px;top:517px;text-align:center;font-size:32px;line-height:40px;color:#0d0d0d">zneaktivníme zobrazení</div>
<div class="a" style="left:413px;width:420px;top:560px;text-align:center;font-size:32px;line-height:40px;color:#0d0d0d">všech pracovišť ve skupině</div></body></html>
